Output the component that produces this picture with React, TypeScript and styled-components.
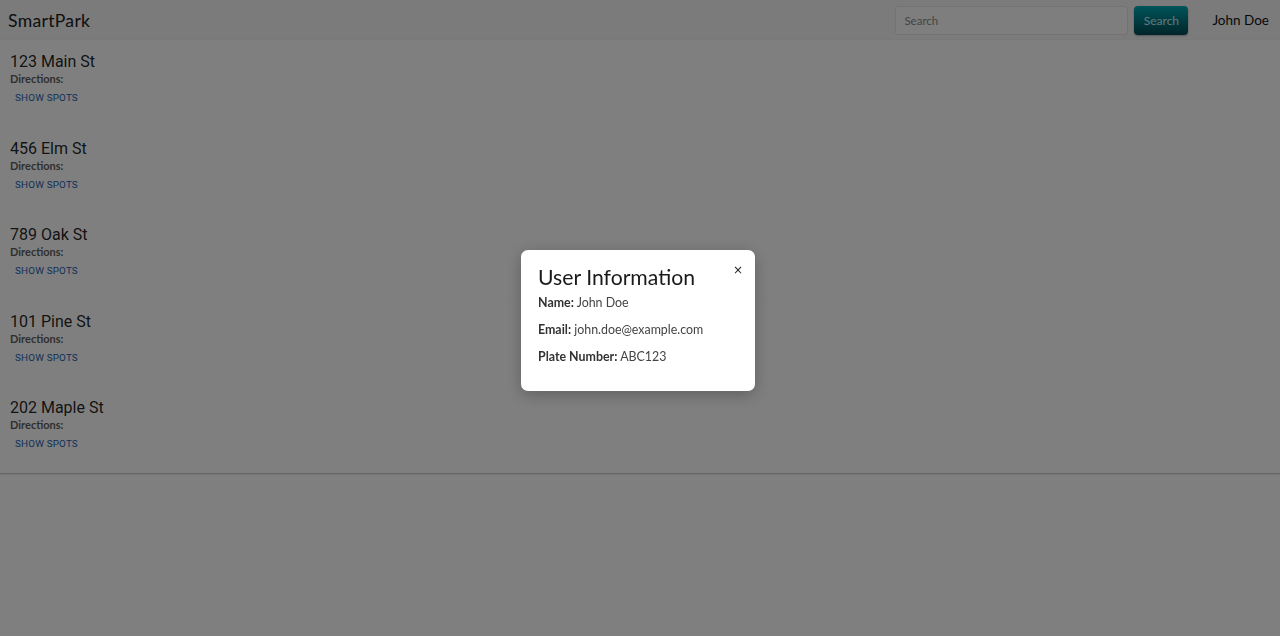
import React from "react";
import styled, { createGlobalStyle } from "styled-components";

const Global = createGlobalStyle`
  html, body { margin: 0; padding: 0; background: #ffffff; }
  body { font-family: "Poppins", "Lato", "Noto Sans", sans-serif; overflow: hidden; }
  * { box-sizing: border-box; }
`;

const Page = styled.div`
  min-height: 636px;
  background: #ffffff;
`;

const Header = styled.header`
  height: 40px;
  background: #f6f6f6;
  display: flex;
  align-items: center;
  padding: 0 11px 0 8px;
`;

const Brand = styled.div`
  font-family: "Lato", sans-serif;
  font-size: 17.6px;
  color: #1c1c1c;
  letter-spacing: 0.3px;
  flex: 1;
`;

const SearchInput = styled.input`
  width: 233px;
  height: 29px;
  border: 1px solid #e6e6e6;
  border-radius: 3px;
  background: #fdfdfd;
  padding: 0 8px;
  font-family: "Lato", sans-serif;
  font-size: 11.5px;
  color: #333;
  &::placeholder { color: #8a8a8a; }
  outline: none;
`;

const SearchButton = styled.button`
  margin-left: 6px;
  width: 54px;
  height: 29px;
  border: none;
  border-radius: 4px;
  background: linear-gradient(180deg, #00aab6 0%, #004a52 100%);
  color: #cdeef0;
  font-family: "Lato", sans-serif;
  font-size: 12px;
  box-shadow: 0 1px 2px rgba(0, 0, 0, 0.3);
`;

const UserName = styled.div`
  margin-left: 24px;
  font-family: "Lato", sans-serif;
  font-size: 13.5px;
  color: #111;
`;

const List = styled.main`
  display: flex;
  flex-direction: column;
`;

const Card = styled.section`
  height: 86.6px;
  padding: 12px 10px 0;
  background: #ffffff;
  box-shadow: 0 1px 2px rgba(0, 0, 0, 0.18), 0 1px 1px rgba(0, 0, 0, 0.1);
`;

const Street = styled.h2`
  margin: 0;
  font-family: Roboto, sans-serif;
  font-weight: 400;
  font-size: 16px;
  line-height: 20px;
  color: rgba(0, 0, 0, 0.87);
`;

const Directions = styled.div`
  font-family: "Lato", sans-serif;
  font-weight: 700;
  font-size: 11px;
  line-height: 14px;
  color: #5e5e5e;
`;

const SpotsButton = styled.button`
  display: block;
  border: none;
  background: transparent;
  padding: 5px 5px 4px;
  font-family: Roboto, sans-serif;
  font-weight: 400;
  font-size: 9.8px;
  letter-spacing: 0.2px;
  text-transform: uppercase;
  color: #1d5fb0;
  line-height: 13px;
`;

const Backdrop = styled.div`
  position: fixed;
  inset: 0;
  background: rgba(0, 0, 0, 0.5);
  display: flex;
  align-items: flex-start;
  justify-content: flex-start;
`;

const Dialog = styled.div`
  position: relative;
  margin: 250px 0 0 521px;
  width: 234px;
  height: 141px;
  background: #ffffff;
  border-radius: 7px;
  padding: 14px 17px;
  box-shadow: 0 4px 16px rgba(0, 0, 0, 0.25);
`;

const DialogTitle = styled.h3`
  margin: 0 0 5px;
  font-family: "Lato", sans-serif;
  font-weight: 400;
  font-size: 21.2px;
  line-height: 26px;
  color: #1a1a1a;
`;

const Close = styled.button`
  position: absolute;
  top: 11px;
  right: 8px;
  border: none;
  background: transparent;
  font-size: 12px;
  line-height: 14px;
  padding: 2px 4px;
  color: #222;
  font-family: "DejaVu Sans", sans-serif;
`;

const InfoLine = styled.p`
  margin: 0 0 12px;
  font-family: "Lato", sans-serif;
  font-size: 12.4px;
  line-height: 15px;
  color: #444;
`;

const Label = styled.strong`
  font-weight: 700;
  color: #333;
`;

const streets = ["123 Main St", "456 Elm St", "789 Oak St", "101 Pine St", "202 Maple St"];

export default function App() {
  return (
    <Page>
      <Global />
      <Header>
        <Brand>SmartPark</Brand>
        <SearchInput placeholder="Search" />
        <SearchButton>Search</SearchButton>
        <UserName>John Doe</UserName>
      </Header>
      <List>
        {streets.map((s) => (
          <Card key={s}>
            <Street>{s}</Street>
            <Directions>Directions:</Directions>
            <SpotsButton>Show spots</SpotsButton>
          </Card>
        ))}
      </List>
      <Backdrop>
        <Dialog>
          <Close aria-label="close">×</Close>
          <DialogTitle>User Information</DialogTitle>
          <InfoLine>
            <Label>Name:</Label> John Doe
          </InfoLine>
          <InfoLine>
            <Label>Email:</Label> john.doe@example.com
          </InfoLine>
          <InfoLine>
            <Label>Plate Number:</Label> ABC123
          </InfoLine>
        </Dialog>
      </Backdrop>
    </Page>
  );
}
